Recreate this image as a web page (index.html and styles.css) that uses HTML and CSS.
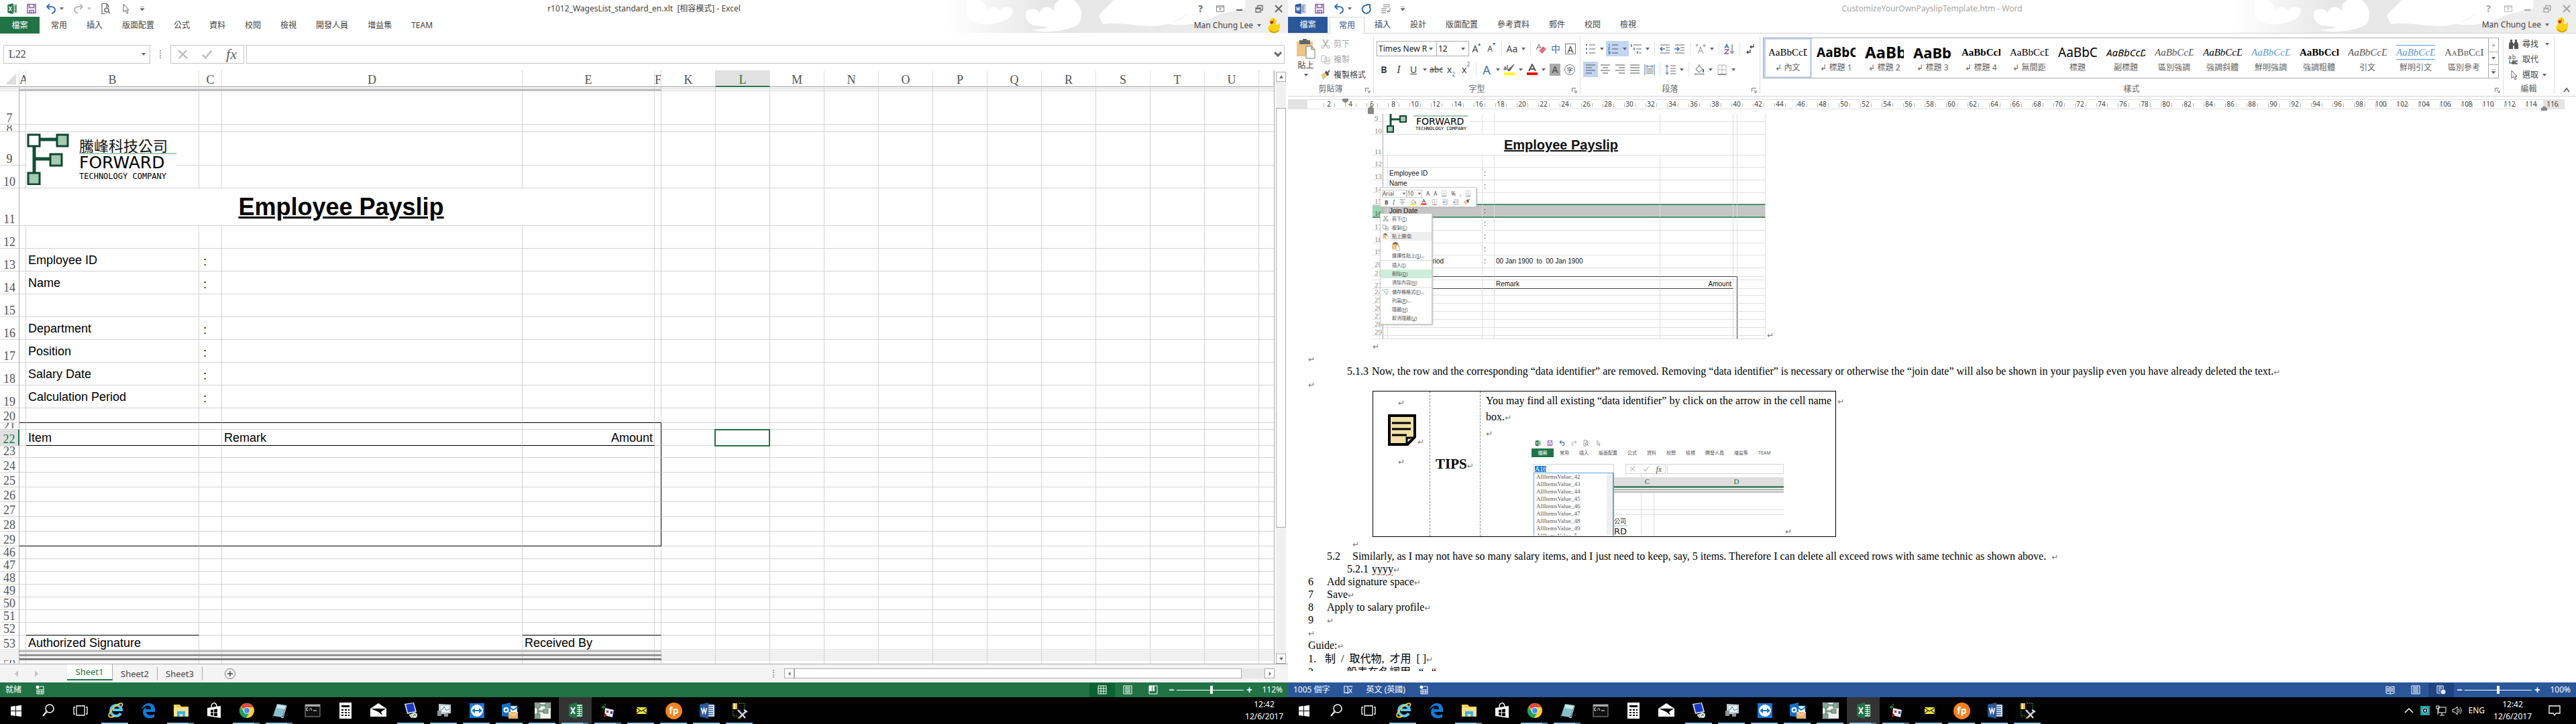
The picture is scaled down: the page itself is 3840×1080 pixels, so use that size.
FILE: index.html
```html
<!DOCTYPE html>
<html lang="zh-Hant">
<head>
<meta charset="utf-8">
<title>Excel and Word</title>
<link rel="stylesheet" href="styles.css">
</head>
<body>
<svg class="defs" aria-hidden="true">
  <symbol id="excel" viewBox="0 0 24 24"><path d="M12 3h10v18H12z" fill="#fff" stroke="#217346"/><path d="M14 6h3M18 6h3M14 9h3M18 9h3M14 12h3M18 12h3M14 15h3M18 15h3M14 18h3M18 18h3" stroke="#217346" stroke-width="2"/><path d="M2 3l12-3v24L2 21z" fill="#217346"/><path d="M5 7l6 10M11 7L5 17" stroke="#fff" stroke-width="2"/></symbol>
  <symbol id="word" viewBox="0 0 24 24"><path d="M12 3h11v18H12z" fill="#fff" stroke="#2b579a"/><path d="M14 6h7M14 9h7M14 12h7M14 15h7M14 18h7" stroke="#2b579a" stroke-width="1.5"/><path d="M1 3l13-3v24L1 21z" fill="#2b579a"/><path d="M3.500 8l2 8 2-7 2 7 2-8" stroke="#fff" stroke-width="1.600" fill="none"/></symbol>
  <symbol id="save" viewBox="0 0 16 16"><path d="M2 1.500h12v13H2zM4.500 1.500v5h7v-5M5 14.500v-4h6v4M7.500 12v2" fill="none" stroke="#8b57a8" stroke-width="1.500"/></symbol>
  <symbol id="undo" viewBox="0 0 16 16"><path d="M6 1L2 5l4 4M2 5h6c4 0 6 2 6 5s-2 4-5 5" fill="none" stroke="#3a72b5" stroke-width="2"/></symbol>
  <symbol id="redo" viewBox="0 0 16 16"><path d="M10 1l4 4-4 4M14 5H8c-4 0-6 2-6 5s2 4 5 5" fill="none" stroke="#bbb" stroke-width="2"/></symbol>
  <symbol id="repeat" viewBox="0 0 16 16"><path d="M9 3a6 6 0 1 0 4 3M8 2h5v5" fill="none" stroke="#3a72b5" stroke-width="2"/></symbol>
  <symbol id="preview" viewBox="0 0 16 16"><path d="M12 6V4L9 .5H2v15h5M9 1v4h3M14 15l-3-3" fill="none" stroke="#666" stroke-width="1.200"/><circle cx="9" cy="10" r="3" fill="none" stroke="#666" stroke-width="1.500"/></symbol>
  <symbol id="cursor" viewBox="0 0 16 16"><path d="M5 1v12l3-3 2 5 2-1-2-4h3z" fill="#fff" stroke="#666"/></symbol>
  <symbol id="lines" viewBox="0 0 16 16"><path d="M4 2h10M4 5h10M1 8h8M1 11h7M1 14h7M14 7v5h-4M12 10l-2 2 2 2" fill="none" stroke="#777"/></symbol>
  <symbol id="dd" viewBox="0 0 8 8"><path d="M1 2h6L4 6z" fill="#666"/></symbol>
  <symbol id="more" viewBox="0 0 8 8"><path d="M1 1h6M1 3.500h6L4 7z" fill="#666" stroke="#666" stroke-width=".6"/></symbol>
  <symbol id="launch" viewBox="0 0 8 8"><path d="M.5 6V.5H6M3 3l4 4M7 4v3H4" fill="none" stroke="#777"/></symbol>
  <symbol id="ribbonopt" viewBox="0 0 14 12"><path d="M.5 1h13v10H.5zM.5 3h13M7 9V5M5 7l2-2 2 2" fill="none" stroke="currentColor"/></symbol>
  <symbol id="restore" viewBox="0 0 12 12"><path d="M1 5h7v6H1zM1 6h7M3.500 4V1.500H11V8H9" fill="none" stroke="currentColor" stroke-width="1.300"/></symbol>
  <symbol id="close" viewBox="0 0 12 12"><path d="M1 1l10 10M11 1L1 11" stroke="currentColor" stroke-width="2"/></symbol>
  <symbol id="duck" viewBox="0 0 20 24"><path d="M5 10C2 6 5 1 9 1s6 4 4 8l-1 2c4 0 6-2 7-3 1 8-2 15-9 15-8 0-12-6-5-13z" fill="#f8d213"/><path d="M4 6l4-1 2 2-3 3-2-1z" fill="#d42a1c"/><path d="M9 4h1" stroke="#222"/><path d="M4 19c3 4 9 5 13 0" stroke="#d89c08" stroke-width="2" fill="none"/></symbol>
  <symbol id="art" viewBox="0 0 510 50" preserveAspectRatio="none"><linearGradient id="fade"><stop offset="0" stop-color="#e6e6e6" stop-opacity="0"/><stop offset=".3" stop-color="#e6e6e6"/><stop offset="1" stop-color="#eee"/></linearGradient><path d="M0 0h510v49H0z" fill="url(#fade)"/><path d="M32 0c-6 20 0 32 20 36 30 2 50-10 48-22-8-6-16-4-18 2-8-8-16-8-20 0C62 6 50-2 44 0zM120 16c-4 10 2 20 12 22l20 2c-4 4-16 4-24 4 16 6 50 4 70-8 8-14 4-28-8-36h-20c-8 4-10 10-8 18-8-12-20-8-22 2-4-8-14-8-20-4zM250 0c-8 10-16 14-22 24l6 12c30-4 60 6 86 2 20-4 30-10 40-18-10 14-30 16-44 12 20 8 60 8 90-10l40-10V0z" fill="#fff"/></symbol>
  <symbol id="logo-mark" viewBox="0 0 64 78"><path d="M12 10h40M12 10v56M12 39h30" stroke="#145039" stroke-width="5"/><path d="M3 3h17v17H3z" fill="#fff" stroke="#124634" stroke-width="3"/><path d="M46 3h16v17H46zM36 32h17v17H36zM3 60h17v17H3z" fill="#a5cbb0" stroke="#124634" stroke-width="3"/></symbol>
  <symbol id="t-win" viewBox="0 0 24 24"><path d="M4 6l7-1v7H4zM12 5l8-1v8h-8zM4 13h7v7l-7-1zM12 13h8v8l-8-1z" fill="#fff"/></symbol>
  <symbol id="t-search" viewBox="0 0 24 24"><circle cx="14" cy="9" r="6" fill="none" stroke="#fff" stroke-width="1.500"/><path d="M10 13l-6 7" stroke="#fff" stroke-width="2"/></symbol>
  <symbol id="t-view" viewBox="0 0 24 24"><path d="M6 5h12v14H6zM4 7H2v10h2M20 7h2v10h-2" fill="none" stroke="#fff" stroke-width="1.300"/></symbol>
  <symbol id="t-ie" viewBox="0 0 24 24"><path d="M20 16a8 8 0 1 1 1-5H8" fill="none" stroke="#55c5f3" stroke-width="4"/><path d="M3 21C-2 17 18-3 22 2c1 1 0 3-1 4M3 21c2 2 6 0 8-1" fill="none" stroke="#f7c92b" stroke-width="2"/></symbol>
  <symbol id="t-edge" viewBox="0 0 24 24"><path d="M2 11C4 2 10 1 13 1c7 0 10 6 9 13H9c1 6 8 6 12 3v5C13 25 4 23 4 14c0-3 2-6 5-7-1 1-1 2-1 3h8c0-8-9-7-14 1z" fill="#0f7bd9"/></symbol>
  <symbol id="t-folder" viewBox="0 0 24 24"><path d="M1 3h9l2 3h11v15H1z" fill="#f5cf62"/><path d="M1 8h22v12H1z" fill="#fde18d"/><path d="M6 21v-8h12v8h-4v-4h-4v4z" fill="#3fb0e8"/></symbol>
  <symbol id="t-store" viewBox="0 0 24 24"><path d="M2 8l20-3v18L2 20z" fill="#fff"/><path d="M8 7c0-8 8-8 8-1" fill="none" stroke="#fff" stroke-width="1.500"/><path d="M7 11l4-.5v4H7zM12 10l5-.5v5h-5zM7 15.500h4v4l-4-.5zM12 15.500h5v5l-5-.5z" fill="#000"/></symbol>
  <symbol id="t-chrome" viewBox="0 0 24 24"><circle cx="12" cy="12" r="11" fill="#fccd34"/><path d="M12 12L2.500 6.500A11 11 0 0 1 21.500 7H12z" fill="#dd4b3e"/><path d="M2.500 6.500A11 11 0 0 0 11 23l5-9-8 0z" fill="#1da361"/><circle cx="12" cy="12" r="5" fill="#fff"/><circle cx="12" cy="12" r="4" fill="#4a8af4"/></symbol>
  <symbol id="t-note" viewBox="0 0 24 24"><path d="M8 2l14 2-6 18L2 20z" fill="#86bfc9"/><path d="M9 3l12 2-2 5-12-2z" fill="#c9e8ec"/><path d="M22 5l-5 18-3-1" fill="none" stroke="#ddd"/></symbol>
  <symbol id="t-cmd" viewBox="0 0 24 24"><path d="M1 3h22v18H1z" fill="#111" stroke="#999"/><path d="M1 3h22v3H1z" fill="#aaa"/><path d="M5 8H3v4h2M7 9v1M7 11v1M9 8l2 4M13 12h5" stroke="#fff" fill="none"/></symbol>
  <symbol id="t-calc" viewBox="0 0 24 24"><path d="M3 0h18v24H3z" fill="#fff"/><path d="M6 4h12v3H6zM6 10h3v2H6zM11 10h3v2h-3zM16 10h2v2h-2zM6 14h3v2H6zM11 14h3v2h-3zM16 14h2v2h-2zM6 18h3v2H6zM11 18h3v2h-3zM16 18h2v2h-2z" fill="#000"/></symbol>
  <symbol id="t-mail" viewBox="0 0 24 24"><path d="M0 9l12-8 12 8v12H0z" fill="#fff"/><path d="M1 9h22l-7 5 2 5-6-5z" fill="#000"/></symbol>
  <symbol id="t-rdp" viewBox="0 0 24 24"><path d="M2 2l14-2 4 14-14 3z" fill="#e4e7ee"/><path d="M4 3l11-2 3 12-11 2z" fill="#1b3ac4"/><path d="M8 18l8-2 5 4-9 3z" fill="#ccc"/><circle cx="17" cy="19" r="4" fill="#dfe8dd"/><path d="M15 20l2-2 2 1" stroke="#2c9a3c" stroke-width="1.500" fill="none"/></symbol>
  <symbol id="t-perf" viewBox="0 0 24 24"><path d="M4 2l18 1v13L4 18z" fill="#c9ccd0"/><path d="M7 5h12v9H7z" fill="#eef7ff"/><path d="M7 11l3-1 2-4 3 6 4-2" stroke="#2783c8" fill="none"/><path d="M2 12h6v8H2zM12 17h6v4h-6z" fill="#8e9299"/></symbol>
  <symbol id="t-tv" viewBox="0 0 24 24"><path d="M1 1h22v22H1z" fill="#1878d8"/><circle cx="12" cy="12" r="9" fill="#fff"/><path d="M4 12l5-4v3h6V8l5 4-5 4v-3H9v3z" fill="#1878d8"/></symbol>
  <symbol id="t-outlook" viewBox="0 0 24 24"><path d="M12 5h11v11H12z" fill="#fff" stroke="#1072c6"/><path d="M12 7l5 4 6-4" fill="none" stroke="#1072c6" stroke-width="2"/><path d="M0 3l13-3v22L0 20z" fill="#1072c6"/><circle cx="6.500" cy="11" r="3" fill="none" stroke="#fff" stroke-width="2"/><path d="M10 14h14v10H10z" fill="#f0b36b"/><path d="M10 14l7 5 7-5" fill="none" stroke="#fff"/></symbol>
  <symbol id="t-f" viewBox="0 0 24 24"><path d="M0 0h24v24H0z" fill="#eef1ee"/><path d="M5 4h15M5 4v17M5 13h11" stroke="#7a9a88" stroke-width="3"/><path d="M1 1h7v7H1zM16 1h7v7h-7zM13 10h7v6h-7zM1 17h7v6H1z" fill="#87a895" stroke="#5d7d6b"/></symbol>
  <symbol id="t-cal" viewBox="0 0 24 24"><path d="M7 8l13 3-2 11-12-3z" fill="#e9e9ef"/><path d="M9 12h3v3H9z" fill="#d22"/><path d="M15 13h3v4h-3z" fill="#24b"/><path d="M1 7l4-3 3 4-4 1zM6 1l3 2-2 2" fill="#2a7d1f"/><path d="M6 15l4 5-5 2z" fill="#a11"/></symbol>
  <symbol id="t-env" viewBox="0 0 24 24"><path d="M5 7h15v10H5z" fill="#e8e337"/><path d="M5 8l7 5 8-5M5 16l5-4M20 16l-5-4" fill="none" stroke="#333" stroke-width="1.300"/></symbol>
  <symbol id="t-tools" viewBox="0 0 24 24"><path d="M1 1h7v9H1z" fill="#e6b422"/><path d="M3 1h2v9H3z" fill="#fff2a8"/><path d="M10 1h9v10M2 12v8h6" stroke="#3db83d" stroke-dasharray="2 1" fill="none"/><path d="M9 11l11 12M22 12L11 23M18 11l5 3" stroke="#cfd3da" stroke-width="2.500"/><path d="M12 21l-3 3" stroke="#d69a2c" stroke-width="2"/></symbol>
  <symbol id="statgrid" viewBox="0 0 14 14"><circle cx="4" cy="3" r="2.500" fill="#fff"/><path d="M7 2h6v11H3V7h10M3 10h10M6 7v6M10 7v6" fill="none" stroke="#fff"/></symbol>
  <symbol id="paste" viewBox="0 0 28 30"><path d="M0 4h24v22H0z" fill="#eec584"/><path d="M4 2h16v6H4z" fill="#666"/><path d="M9 0h6v4H9z" fill="#666"/><path d="M14 11h8l5 5v13H14zM22 11v5h5" fill="#fff" stroke="#777"/></symbol>
  <symbol id="cut" viewBox="0 0 14 14"><path d="M3 0l6 10M11 0L5 10" stroke="#777" stroke-width="1.500"/><circle cx="3" cy="11" r="2" fill="none" stroke="#777"/><circle cx="11" cy="11" r="2" fill="none" stroke="#777"/></symbol>
  <symbol id="copy" viewBox="0 0 14 14"><path d="M1 1h5l2 2v7H1zM6 4h5l2 2v7H6zM8 8h4M8 10h4" fill="#fff" stroke="#888"/></symbol>
  <symbol id="brush" viewBox="0 0 14 14"><path d="M0 6l7-3 3 4-6 7z" fill="#eec584"/><path d="M7 3l3 4 1-1-3-4zM10 4l3-4" fill="#555" stroke="#555" stroke-width="2"/></symbol>
  <symbol id="eraser" viewBox="0 0 16 16"><path d="M1 9L5 1l3 6M2 6h5" fill="none" stroke="#666"/><path d="M5 11l6-7 5 4-6 7z" fill="#e06c80"/></symbol>
  <symbol id="bullets" viewBox="0 0 16 16"><path d="M1 2h2M1 8h2M1 14h2" stroke="#3a72b5" stroke-width="2"/><path d="M6 2h9M6 8h9M6 14h9" stroke="#666"/></symbol>
  <symbol id="numbered" viewBox="0 0 16 16"><path d="M1 1h1v3M0 6h3l-3 3h3M0 12h3v1H1h2v2H0" stroke="#3a72b5" fill="none"/><path d="M6 2h9M6 8h9M6 14h9" stroke="#555"/></symbol>
  <symbol id="multi" viewBox="0 0 16 16"><path d="M1 1v4M5 6v4M10 11v4" stroke="#3a72b5" stroke-width="1.500"/><path d="M4 2h12M8 8h8M12 14h4" stroke="#666"/></symbol>
  <symbol id="outdent" viewBox="0 0 16 16"><path d="M1 2h14M9 6h6M9 10h6M1 14h14" stroke="#666"/><path d="M8 8H2M4 5L1 8l3 3" stroke="#3a72b5" stroke-width="1.500" fill="none"/></symbol>
  <symbol id="indent" viewBox="0 0 16 16"><path d="M1 2h14M9 6h6M9 10h6M1 14h14" stroke="#666"/><path d="M0 8h6M4 5l3 3-3 3" stroke="#3a72b5" stroke-width="1.500" fill="none"/></symbol>
  <symbol id="asian" viewBox="0 0 16 16"><path d="M4 15L8 5l4 10M5 11h6M1 1l3 3M4 1L1 4M11 3h4M13 1l2 2-2 2" fill="none" stroke="#aaa" stroke-width="1.300"/></symbol>
  <symbol id="sort" viewBox="0 0 16 16"><path d="M1 7l3-6 3 6M2 5h4" stroke="#3a72b5" fill="none" stroke-width="1.300"/><path d="M1 9h6l-6 6h6" stroke="#8b57a8" fill="none" stroke-width="1.300"/><path d="M12 1v13M9 11l3 4 3-4" stroke="#555" fill="none"/></symbol>
  <symbol id="marks" viewBox="0 0 16 16"><path d="M13 1v4H8M10 3L8 5l2 2M8 9v4H3M5 11l-2 2 2 2" fill="none" stroke="#444" stroke-width="1.300"/></symbol>
  <symbol id="al" viewBox="0 0 16 16"><path d="M1 1h14M1 5h9M1 9h14M1 13h9" stroke="#555"/></symbol>
  <symbol id="ac" viewBox="0 0 16 16"><path d="M1 1h14M4 5h8M1 9h14M4 13h8" stroke="#555"/></symbol>
  <symbol id="ar" viewBox="0 0 16 16"><path d="M1 1h14M6 5h9M1 9h14M6 13h9" stroke="#555"/></symbol>
  <symbol id="aj" viewBox="0 0 16 16"><path d="M1 1h14M1 5h14M1 9h14M1 13h14" stroke="#555"/></symbol>
  <symbol id="ad" viewBox="0 0 16 16"><path d="M1 0v16M15 0v16M3 3h10M5 1L3 3l2 2M11 1l2 2-2 2" stroke="#3a72b5" fill="none"/><path d="M3 7h10M3 10h10M3 13h10" stroke="#555"/></symbol>
  <symbol id="spacing" viewBox="0 0 16 16"><path d="M3 1v14M1 4l2-3 2 3M1 12l2 3 2-3" stroke="#3a72b5" fill="none"/><path d="M8 2h8M8 6h8M8 10h8M8 14h8" stroke="#666"/></symbol>
  <symbol id="bucket" viewBox="0 0 16 16"><path d="M3 7l5-5 5 5-5 5zM8 2V0" fill="#fff" stroke="#555"/><path d="M14 7v5" stroke="#3a72b5" stroke-width="2"/><path d="M1 14h14v2H1z" fill="#fff" stroke="#888"/></symbol>
  <symbol id="fillyellow" viewBox="0 0 16 16"><path d="M3 7l5-5 5 5-5 5zM8 2V0" fill="#fff" stroke="#555"/><path d="M14 7v5" stroke="#3a72b5" stroke-width="2"/><path d="M1 12h14v4H1z" fill="#ff0"/></symbol>
  <symbol id="border" viewBox="0 0 16 16"><path d="M2 1h12v14H2zM8 1v14M2 8h12" fill="none" stroke="#777" stroke-dasharray="1 1"/><path d="M2 15h12" stroke="#444"/></symbol>
  <symbol id="find" viewBox="0 0 16 16"><path d="M2 5h5v10H1V8zM9 5h5l1 3v7H9zM3 1h3v4H3zM10 1h3v4h-3zM6 7h4v3H6z" fill="#555"/></symbol>
  <symbol id="replace" viewBox="0 0 16 16"><path d="M1 3h3v4H1V5h3M7 0v7h3V3H7" fill="none" stroke="#666"/><path d="M6 10h3v4H6v-2h3M14 10h-3v4h3" fill="none" stroke="#444" stroke-width="1.400"/><path d="M2 9v4h3" fill="none" stroke="#3a72b5" stroke-width="1.400"/></symbol>
  <symbol id="highlight" viewBox="0 0 18 18"><path d="M16 1l-6 9-3 1 1-3z" fill="#777" stroke="#555"/><path d="M1 5h3v4H1V7h3M6 2v7h2" stroke="#444" fill="none"/><path d="M1 13h16v4H1z" fill="#ff0"/></symbol>
  <symbol id="fontcolor" viewBox="0 0 18 18"><path d="M4 11L9 1l5 10M6 8h6" stroke="#555" fill="none" stroke-width="2"/><path d="M1 13h16v4H1z" fill="#f00"/></symbol>
  <symbol id="v-normal" viewBox="0 0 14 14"><path d="M1 1h12v12H1zM5 1v12M9 1v12M1 5h12M1 9h12" fill="none" stroke="#fff"/></symbol>
  <symbol id="v-page" viewBox="0 0 14 14"><path d="M1 1h12v12H1zM4 3h6v8H4zM5 5h4M5 7h4M5 9h4" fill="none" stroke="#fff"/></symbol>
  <symbol id="v-break" viewBox="0 0 14 14"><path d="M1 1h12v12H1z" fill="none" stroke="#fff"/><path d="M1 1h4v8H1zM6 1h3v8H6z" fill="#fff"/></symbol>
  <symbol id="v-read" viewBox="0 0 14 14"><path d="M1 2l6 1 6-1v10l-6 1-6-1zM7 3v10M2 5h4M2 7h4M2 9h4M8 5h4M8 7h4M8 9h4" fill="none" stroke="#fff"/></symbol>
  <symbol id="v-lines" viewBox="0 0 14 14"><path d="M1 1h12v12H1zM3 3h8M3 5h8M3 7h8M3 9h8M3 11h8" fill="none" stroke="#fff"/></symbol>
  <symbol id="v-web" viewBox="0 0 14 14"><path d="M10 6V1H1v11h5M3 3h5M3 5h5M3 7h3M3 9h3" fill="none" stroke="#fff"/><circle cx="10" cy="10" r="3.500" fill="#dfe8f5"/></symbol>
  <symbol id="proof" viewBox="0 0 16 14"><path d="M1 1h4l2 1v11l-2-1H1zM7 2l2-1M9 5l5 7M14 5l-5 7M7 13l2-1M9 1h5v2" fill="none" stroke="#fff" stroke-width="1.200"/></symbol>
</svg>

<div class="screens">
<!-- Excel window -->
<section class="win excel">
  <header class="title">
    <svg class="art"><use href="#art"/></svg>
    <div class="qat">
      <button aria-label="Excel"><svg><use href="#excel"/></svg></button><button aria-label="儲存"><svg><use href="#save"/></svg></button>
      <span><button aria-label="復原"><svg><use href="#undo"/></svg></button><button class="dd" aria-label="復原選單"><svg><use href="#dd"/></svg></button></span>
      <span><button aria-label="重做"><svg><use href="#redo"/></svg></button><button class="dd faint" aria-label="重做選單"><svg><use href="#dd"/></svg></button></span>
      <button aria-label="預覽列印"><svg><use href="#preview"/></svg></button><button aria-label="選取"><svg><use href="#cursor"/></svg></button><button class="dd" aria-label="自訂"><svg><use href="#more"/></svg></button>
    </div>
    <h1>r1012_WagesList_standard_en.xlt&nbsp; [相容模式] - Excel</h1>
    <div class="ctl"><button>?</button><button aria-label="功能區選項"><svg><use href="#ribbonopt"/></svg></button><button aria-label="最小化"><i class="min"></i></button><button aria-label="還原"><svg><use href="#restore"/></svg></button><button aria-label="關閉"><svg><use href="#close"/></svg></button></div>
  </header>
  <nav class="tabs"><button class="file">檔案</button><button>常用</button><button>插入</button><button>版面配置</button><button>公式</button><button>資料</button><button>校閱</button><button>檢視</button><button>開發人員</button><button>增益集</button><button>TEAM</button>
    <div class="account">Man Chung Lee<svg class="arr"><use href="#dd"/></svg><svg class="duck"><use href="#duck"/></svg></div></nav>
  <div class="formula">
    <div class="namebox"><input aria-label="名稱方塊" value="L22"><svg class="arr"><use href="#dd"/></svg></div>
    <i class="dots"></i>
    <div class="fxbox"><button aria-label="取消"><svg viewBox="0 0 16 16"><path d="M1 2l13 12M13 2L2 14" stroke="#c0c0c0" stroke-width="2.500"/></svg></button><button aria-label="輸入"><svg viewBox="0 0 18 16"><path d="M1 9l5 5L16 2" stroke="#c0c0c0" stroke-width="3" fill="none"/></svg></button><button class="fx">fx</button></div>
    <div class="fbar"><input aria-label="資料編輯列"><svg viewBox="0 0 12 8"><path d="M1 1l5 5 5-5" fill="none" stroke="#666" stroke-width="3"/></svg></div>
  </div>
  <div class="gridarea">
    <div class="sheetwrap">
    <table class="sheet">
      <colgroup><col class="c0"><col class="cA"><col class="cB"><col class="cC"><col class="cD"><col class="cE"><col class="cF"><col class="cK"><col class="cK"><col class="cK"><col class="cK"><col class="cK"><col class="cK"><col class="cK"><col class="cK"><col class="cK"><col class="cK"><col class="cK"><col></colgroup>
      <thead><tr><th class="corner"><th>A<th>B<th>C<th>D<th>E<th>F<th>K<th class="on">L<th>M<th>N<th>O<th>P<th>Q<th>R<th>S<th>T<th>U<th></tr></thead>
      <tbody>
      <tr class="h3"><th><td><td><td><td><td><td><td colspan="12">
      <tr class="h3 bar1"><th><td><td><td><td><td><td><td colspan="12">
      <tr class="h50"><th>7<td><td><td><td><td><td><td colspan="12">
      <tr class="h11"><th><div>8</div><td><td><td><td><td><td><td colspan="12">
      <tr class="h50"><th>9<td><td class="anchor"><div class="logo"><svg><use href="#logo-mark"/></svg><div><b>騰峰科技公司</b><hr><strong>FORWARD</strong><small>TECHNOLOGY COMPANY</small></div></div><td><td><td><td><td colspan="12">
      <tr class="h34"><th>10<td><td><td><td><td><td><td colspan="12">
      <tr class="h56"><th>11<td class="nr"><td class="slip" colspan="4">Employee Payslip<td><td colspan="12">
      <tr class="h34"><th>12<td><td><td><td><td><td><td colspan="12">
      <tr class="h34"><th>13<td><td>Employee ID<td class="col">:<td><td><td><td colspan="12">
      <tr class="h34"><th>14<td><td>Name<td class="col">:<td><td><td><td colspan="12">
      <tr class="h34"><th>15<td><td><td><td><td><td><td colspan="12">
      <tr class="h34"><th>16<td><td>Department<td class="col">:<td><td><td><td colspan="12">
      <tr class="h34"><th>17<td><td>Position<td class="col">:<td><td><td><td colspan="12">
      <tr class="h34"><th>18<td><td>Salary Date<td class="col">:<td><td><td><td colspan="12">
      <tr class="h34"><th>19<td><td>Calculation Period<td class="col">:<td><td><td><td colspan="12">
      <tr class="h22 under"><th>20<td><td><td><td><td><td><td colspan="12">
      <tr class="h10 boxed"><th><div>21</div><td><td><td><td><td><td><td colspan="12">
      <tr class="h24 boxed head"><th class="on">22<td><td>Item<td><td>Remark<td class="right">Amount<td><td class="anchor" colspan="12"><i class="selcell"></i>
      <tr class="h18 boxed"><th>23<td><td><td><td><td><td><td colspan="12">
      <tr class="h22 boxed"><th>24<td><td><td><td><td><td><td colspan="12">
      <tr class="h22 boxed"><th>25<td><td><td><td><td><td><td colspan="12">
      <tr class="h22 boxed"><th>26<td><td><td><td><td><td><td colspan="12">
      <tr class="h22 boxed"><th>27<td><td><td><td><td><td><td colspan="12">
      <tr class="h22 boxed"><th>28<td><td><td><td><td><td><td colspan="12">
      <tr class="h22 boxed under"><th>29<td><td><td><td><td><td><td colspan="12">
      <tr class="h19"><th>46<td><td><td><td><td><td><td colspan="12">
      <tr class="h19"><th>47<td><td><td><td><td><td><td colspan="12">
      <tr class="h19"><th>48<td><td><td><td><td><td><td colspan="12">
      <tr class="h19"><th>49<td><td><td><td><td><td><td colspan="12">
      <tr class="h19"><th>50<td><td><td><td><td><td><td colspan="12">
      <tr class="h19"><th>51<td><td><td><td><td><td><td colspan="12">
      <tr class="h19"><th>52<td><td class="sign"><td><td><td class="sign"><td class="sign"><td colspan="12">
      <tr class="h22"><th>53<td><td>Authorized Signature<td><td><td>Received By<td><td colspan="12">
      <tr class="h3 bar1"><th><td><td><td><td><td><td><td colspan="12">
      <tr class="h3"><th><td><td><td><td><td><td><td colspan="12">
      <tr class="h3 bar2"><th><td><td><td><td><td><td><td colspan="12">
      <tr class="h3"><th><td><td><td><td><td><td><td colspan="12">
      <tr class="h3 bar3"><th><td><td><td><td><td><td><td colspan="12">
      <tr class="h6"><th><div>59</div><td><td><td><td><td><td><td colspan="12">
      </tbody>
    </table>
    </div>
    <div class="vscroll"><button aria-label="上"><svg viewBox="0 0 8 8"><path d="M1 6h6L4 1z" fill="#777"/></svg></button><i class="before"></i><i class="thumb"></i><i class="post"></i><button aria-label="下"><svg><use href="#dd"/></svg></button></div>
  </div>
  <div class="sheetbar">
    <button class="nav" aria-label="上一張"><svg viewBox="0 0 8 12"><path d="M6 1v10L1 6z" fill="#c4c4c4"/></svg></button><button class="nav" aria-label="下一張"><svg viewBox="0 0 8 12"><path d="M2 1v10l5-5z" fill="#c4c4c4"/></svg></button>
    <button class="st on">Sheet1</button><button class="st">Sheet2</button><button class="st">Sheet3</button>
    <button class="add" aria-label="新增"><svg viewBox="0 0 18 18"><circle cx="9" cy="9" r="7.500" fill="none" stroke="#777"/><path d="M5 9h8M9 5v8" stroke="#666" stroke-width="2"/></svg></button>
    <div class="hscroll"><i class="dots"></i><button aria-label="左"><svg viewBox="0 0 8 12"><path d="M6 1v10L1 6z" fill="#777"/></svg></button><i class="thumb"></i><i class="post"></i><button aria-label="右"><svg viewBox="0 0 8 12"><path d="M2 1v10l5-5z" fill="#777"/></svg></button></div>
  </div>
  <footer class="status green"><span>就緒</span><svg><use href="#statgrid"/></svg>
    <div class="views"><button class="on" aria-label="標準"><svg><use href="#v-normal"/></svg></button><button aria-label="整頁"><svg><use href="#v-page"/></svg></button><button aria-label="分頁"><svg><use href="#v-break"/></svg></button></div>
    <div class="zoom"><button>−</button><input type="range" aria-label="縮放" min="0" max="100" value="52"><button>+</button><span>112%</span></div></footer>
  <nav class="taskbar">
    <div class="sys"><button aria-label="開始"><svg><use href="#t-win"/></svg></button><button aria-label="搜尋"><svg><use href="#t-search"/></svg></button><button aria-label="工作檢視"><svg><use href="#t-view"/></svg></button></div>
    <button class="run" aria-label="Internet Explorer"><svg><use href="#t-ie"/></svg></button><button aria-label="Edge"><svg><use href="#t-edge"/></svg></button><button class="run grp" aria-label="檔案總管"><svg><use href="#t-folder"/></svg></button><button aria-label="市集"><svg><use href="#t-store"/></svg></button><button class="run grp" aria-label="Chrome"><svg><use href="#t-chrome"/></svg></button><button class="run grp" aria-label="記事本"><svg><use href="#t-note"/></svg></button><button aria-label="命令提示字元"><svg><use href="#t-cmd"/></svg></button><button aria-label="小算盤"><svg><use href="#t-calc"/></svg></button><button aria-label="郵件"><svg><use href="#t-mail"/></svg></button><button class="run" aria-label="遠端桌面"><svg><use href="#t-rdp"/></svg></button><button class="run" aria-label="監視"><svg><use href="#t-perf"/></svg></button><button class="run" aria-label="TeamViewer"><svg><use href="#t-tv"/></svg></button><button class="run" aria-label="Outlook"><svg><use href="#t-outlook"/></svg></button><button class="run" aria-label="Forward"><svg><use href="#t-f"/></svg></button><button class="run grp act" aria-label="Excel"><svg><use href="#excel"/></svg></button><button class="run grp" aria-label="行事曆"><svg><use href="#t-cal"/></svg></button><button class="run" aria-label="信件"><svg><use href="#t-env"/></svg></button><button class="run"><span class="fp">fp</span></button><button class="run" aria-label="Word"><svg><use href="#word"/></svg></button><button class="run" aria-label="工具"><svg><use href="#t-tools"/></svg></button>
    <div class="tray"><time>12:42<br>12/6/2017</time></div>
  </nav>
</section>

<!-- Word window -->
<section class="win wordwin">
  <header class="title idle">
    <svg class="art"><use href="#art"/></svg>
    <div class="qat">
      <button aria-label="Word"><svg><use href="#word"/></svg></button><button aria-label="儲存"><svg><use href="#save"/></svg></button>
      <span><button aria-label="復原"><svg><use href="#undo"/></svg></button><button class="dd" aria-label="復原選單"><svg><use href="#dd"/></svg></button></span>
      <button aria-label="重複"><svg><use href="#repeat"/></svg></button><button aria-label="段落標記"><svg><use href="#lines"/></svg></button><button class="dd" aria-label="自訂"><svg><use href="#more"/></svg></button>
    </div>
    <h1>CustomizeYourOwnPayslipTemplate.htm - Word</h1>
    <div class="ctl"><button>?</button><button aria-label="功能區選項"><svg><use href="#ribbonopt"/></svg></button><button aria-label="最小化"><i class="min"></i></button><button aria-label="還原"><svg><use href="#restore"/></svg></button><button aria-label="關閉"><svg><use href="#close"/></svg></button></div>
  </header>
  <nav class="tabs lined"><button class="file">檔案</button><button class="on">常用</button><button>插入</button><button>設計</button><button>版面配置</button><button>參考資料</button><button>郵件</button><button>校閱</button><button>檢視</button>
    <div class="account">Man Chung Lee<svg class="arr"><use href="#dd"/></svg><svg class="duck"><use href="#duck"/></svg></div></nav>
  <div class="ribbon">
    <div class="grp1 group"><div class="body clip">
        <button class="big"><svg><use href="#paste"/></svg>貼上<svg class="arr"><use href="#dd"/></svg></button>
        <div class="stack"><button class="off"><svg><use href="#cut"/></svg>剪下</button><button class="off"><svg><use href="#copy"/></svg>複製</button><button><svg><use href="#brush"/></svg>複製格式</button></div></div>
      <div class="cap">剪貼簿<svg><use href="#launch"/></svg></div></div>
    <div class="grp2 group"><div class="body">
        <div class="row"><div class="combo w90"><select aria-label="字型"><option>Times New R</option></select><svg class="arr"><use href="#dd"/></svg></div><div class="combo w48"><select aria-label="字型大小"><option>12</option></select><svg class="arr"><use href="#dd"/></svg></div><button class="ltr">A<sup>▴</sup></button><button class="ltr sm">A<sup>▾</sup></button><i class="sep"></i><button class="ltr">Aa</button><svg class="dd"><use href="#dd"/></svg><i class="sep"></i><button aria-label="清除格式"><svg><use href="#eraser"/></svg></button><button class="cjk">中</button><button class="boxa">A</button></div>
        <div class="row"><button><b>B</b></button><button class="ser"><i>I</i></button><button><u>U</u></button><svg class="dd"><use href="#dd"/></svg><button class="abc"><s>abc</s></button><button>x<sub>2</sub></button><button>x<sup>2</sup></button><i class="sep"></i><button class="glow">A</button><svg class="dd"><use href="#dd"/></svg><button aria-label="醒目提示"><svg class="l"><use href="#highlight"/></svg></button><svg class="dd"><use href="#dd"/></svg><button aria-label="字型色彩"><svg class="l"><use href="#fontcolor"/></svg></button><svg class="dd"><use href="#dd"/></svg><button class="shade">A</button><button class="ring">字</button></div></div>
      <div class="cap">字型<svg><use href="#launch"/></svg></div></div>
    <div class="grp3 group"><div class="body">
        <div class="row"><button aria-label="項目符號"><svg><use href="#bullets"/></svg></button><svg class="dd"><use href="#dd"/></svg><span class="hot"><button aria-label="編號"><svg><use href="#numbered"/></svg></button><svg class="dd"><use href="#dd"/></svg></span><button aria-label="多層次"><svg><use href="#multi"/></svg></button><svg class="dd"><use href="#dd"/></svg><i class="sep"></i><button aria-label="減少縮排"><svg><use href="#outdent"/></svg></button><button aria-label="增加縮排"><svg><use href="#indent"/></svg></button><i class="sep"></i><button aria-label="亞洲配置"><svg><use href="#asian"/></svg></button><svg class="dd"><use href="#dd"/></svg><i class="sep"></i><button aria-label="排序"><svg><use href="#sort"/></svg></button><i class="sep"></i><button aria-label="標記"><svg><use href="#marks"/></svg></button></div>
        <div class="row"><button class="hot" aria-label="靠左"><svg><use href="#al"/></svg></button><button aria-label="置中"><svg><use href="#ac"/></svg></button><button aria-label="靠右"><svg><use href="#ar"/></svg></button><button aria-label="左右對齊"><svg><use href="#aj"/></svg></button><button aria-label="分散對齊"><svg><use href="#ad"/></svg></button><i class="sep"></i><button aria-label="行距"><svg><use href="#spacing"/></svg></button><svg class="dd"><use href="#dd"/></svg><i class="sep"></i><button aria-label="網底"><svg><use href="#bucket"/></svg></button><svg class="dd"><use href="#dd"/></svg><button aria-label="框線"><svg><use href="#border"/></svg></button><svg class="dd"><use href="#dd"/></svg></div></div>
      <div class="cap">段落<svg><use href="#launch"/></svg></div></div>
    <div class="grp4 group"><div class="gallery">
        <button class="on"><span class="s1">AaBbCcDd</span>↲ 內文</button><button><span class="h1">AaBbCc</span>↲ 標題 1</button><button><span class="h2">AaBbC</span>↲ 標題 2</button><button><span class="h3t">AaBbC</span>↲ 標題 3</button><button><span class="s1 b">AaBbCcD</span>↲ 標題 4</button><button><span class="s1">AaBbCcDd</span>↲ 無間距</button><button><span class="t1">AaBbCc</span>標題</button><button><span class="t2">AaBbCcD</span>副標題</button><button><span class="s1 i g">AaBbCcDd</span>區別強調</button><button><span class="s1 i">AaBbCcDd</span>強調斜體</button><button><span class="s1 i bl">AaBbCcDd</span>鮮明強調</button><button><span class="s1 b">AaBbCcD</span>強調粗體</button><button><span class="s1 i g">AaBbCcDd</span>引文</button><button><span class="s1 i bl rule">AaBbCcDd</span>鮮明引文</button><button><span class="s1 sc g">AaBbCcDd</span>區別參考</button>
        <div class="gscroll"><button class="up" aria-label="上"><svg viewBox="0 0 8 8"><path d="M1 6h6L4 2z" fill="#bbb"/></svg></button><button aria-label="下"><svg><use href="#dd"/></svg></button><button aria-label="更多"><svg><use href="#more"/></svg></button></div></div>
      <div class="cap">樣式<svg><use href="#launch"/></svg></div></div>
    <div class="grp5 group"><div class="stack"><button><svg><use href="#find"/></svg>尋找<svg class="arr far"><use href="#dd"/></svg></button><button><svg><use href="#replace"/></svg>取代</button><button><svg><use href="#cursor"/></svg>選取<svg class="arr"><use href="#dd"/></svg></button></div><div class="cap">編輯</div></div>
    <button class="fold" aria-label="摺疊"><svg viewBox="0 0 10 8"><path d="M1 7l4-5 4 5" fill="none" stroke="#666" stroke-width="2"/></svg></button>
  </div>
  <div class="ruler"><i class="mk down"></i><i class="mk hang"></i><i class="mk end"></i>
    <div class="nums"><span>2</span><span>4</span><span>6</span><span>8</span><span>10</span><span>12</span><span>14</span><span>16</span><span>18</span><span>20</span><span>22</span><span>24</span><span>26</span><span>28</span><span>30</span><span>32</span><span>34</span><span>36</span><span>38</span><span>40</span><span>42</span><span>44</span><span>46</span><span>48</span><span>50</span><span>52</span><span>54</span><span>56</span><span>58</span><span>60</span><span>62</span><span>64</span><span>66</span><span>68</span><span>70</span><span>72</span><span>74</span><span>76</span><span>78</span><span>80</span><span>82</span><span>84</span><span>86</span><span>88</span><span>90</span><span>92</span><span>94</span><span>96</span><span>98</span><span>100</span><span>102</span><span>104</span><span>106</span><span>108</span><span>110</span><span>112</span><span>114</span><span>116</span></div></div>
  <main class="doc">
    <div class="figrow"><figure class="fig1">
      <table class="mini">
        <colgroup><col class="m0"><col class="mA"><col class="mB"><col class="mC"><col class="mD"><col class="mE"><col class="mF"><col></colgroup>
        <tr class="k12"><th>9<td><td><td><td><td><td><td>
        <tr class="k19"><th>10<td><td><td><td><td><td><td>
        <tr class="k31"><th>11<td class="nr"><td class="slip" colspan="4">Employee Payslip<td><td>
        <tr class="k18"><th>12<td><td><td><td><td><td><td>
        <tr class="k19"><th>13<td><td>Employee ID<td>:<td><td><td><td>
        <tr class="k19"><th>14<td><td class="high">Name<td>:<td><td><td><td>
        <tr class="k18 above"><th>15<td><td><td><td><td><td><td>
        <tr class="k19 picked"><th>16<td><td>Join Date<td>:<td><td><td><td>
        <tr class="k19"><th>17<td><td><td>:<td><td><td><td>
        <tr class="k19"><th>18<td><td><td>:<td><td><td><td>
        <tr class="k18"><th>19<td><td><td>:<td><td><td><td>
        <tr class="k19"><th>20<td><td>Calculation Period<td>:<td>00 Jan 1900&nbsp; to&nbsp; 00 Jan 1900<td><td><td>
        <tr class="k13 under"><th>21<td><td><td><td><td><td><td>
        <tr class="k5 boxed"><th><td><td><td><td><td><td><td>
        <tr class="k13 boxed head"><th>23<td><td>Item<td><td>Remark<td class="right">Amount<td><td>
        <tr class="k10 boxed"><th>24<td><td><td><td><td><td><td>
        <tr class="k12 boxed"><th>25<td><td><td><td><td><td><td>
        <tr class="k12 boxed"><th>26<td><td><td><td><td><td><td>
        <tr class="k12 boxed"><th>27<td><td><td><td><td><td><td>
        <tr class="k12 boxed"><th>28<td><td><td><td><td><td><td>
        <tr class="k12 boxed"><th>29<td><td><td><td><td><td><td>
        <tr class="k5 boxed"><th><td><td><td><td><td><td><td>
      </table>
      <div class="logo2"><svg viewBox="0 0 32 28"><path d="M6 0v20M6 8h18" stroke="#145039" stroke-width="3"/><path d="M20 3h9v9h-9zM1 18h9v9H1z" fill="#a5cbb0" stroke="#124634" stroke-width="2"/></svg><div><hr><strong>FORWARD</strong><small>TECHNOLOGY COMPANY</small></div></div>
      <div class="minibar"><div><span class="mf">Arial<svg><use href="#dd"/></svg></span><span class="ms">10<svg><use href="#dd"/></svg></span><span>A</span><span>A</span><svg><use href="#border"/></svg><span>%</span><span>,</span><svg><use href="#border"/></svg></div><div><b>B</b><i>I</i><svg><use href="#ac"/></svg><svg><use href="#fillyellow"/></svg><svg><use href="#fontcolor"/></svg><svg><use href="#border"/></svg><svg><use href="#indent"/></svg><svg><use href="#outdent"/></svg><svg><use href="#brush"/></svg></div></div>
      <ul class="menu"><li><svg><use href="#cut"/></svg>剪下(<u>T</u>)<li><svg><use href="#copy"/></svg>複製(<u>C</u>)<li class="opt"><svg><use href="#paste"/></svg>貼上選項:<li class="pic"><svg><use href="#paste"/></svg><li class="ln">選擇性貼上(<u>S</u>)...<li>插入(<u>I</u>)<li class="del">刪除(<u>D</u>)<li class="ln">清除內容(<u>N</u>)<li><svg><use href="#multi"/></svg>儲存格格式(<u>F</u>)...<li>列高(<u>R</u>)...<li>隱藏(<u>H</u>)<li>取消隱藏(<u>U</u>)</ul>
    </figure><span class="pm">↵</span></div>
    <p class="in3"><span class="pm">↵</span></p>
    <p><span class="pm">↵</span></p>
    <p class="in2"><span class="n">5.1.3</span>Now, the row and the corresponding “data identifier” are removed. Removing “data identifier” is necessary or otherwise the “join date” will also be shown in your payslip even you have already deleted the text.<span class="pm">↵</span></p>
    <p><span class="pm">↵</span></p>
    <div class="figrow top"><table class="tips"><tr><td class="ta"><p><span class="pm">↵</span></p><div><svg viewBox="0 0 43 48"><path d="M3 3h38v32L30 46H3z" fill="#efe0a8" stroke="#000" stroke-width="4"/><path d="M7 14h28M7 23h28M7 32h22M29 46V36h12" stroke="#000" stroke-width="3" fill="none"/></svg><span class="pm">↵</span></div><p><span class="pm">↵</span></p>
      <td class="tb"><b>TIPS</b><span class="pm">↵</span>
      <td class="tc"><p>You may find all existing “data identifier” by click on the arrow in the cell name</p><p>box.<span class="pm">↵</span></p><p><span class="pm">↵</span></p>
      <div class="figrow"><figure class="fig2">
        <div class="q"><svg><use href="#excel"/></svg><svg><use href="#save"/></svg><svg><use href="#undo"/></svg><svg><use href="#redo"/></svg><svg><use href="#preview"/></svg><svg><use href="#cursor"/></svg></div>
        <div class="tt"><span class="f">檔案</span><span>常用</span><span>插入</span><span>版面配置</span><span>公式</span><span>資料</span><span>校閱</span><span>檢視</span><span>開發人員</span><span>增益集</span><span>TEAM</span></div>
        <div class="ff"><span class="nb"><mark>A16</mark></span><span class="xx"><svg viewBox="0 0 16 16"><path d="M1 2l13 12M13 2L2 14" stroke="#bbb" stroke-width="2"/></svg><svg viewBox="0 0 18 16"><path d="M1 9l5 5L16 2" stroke="#bbb" stroke-width="2" fill="none"/></svg><em>fx</em></span><span class="bb"></span></div>
        <div class="low"><ul><li>AllItemsValue_42<li>AllItemsValue_43<li>AllItemsValue_44<li>AllItemsValue_45<li>AllItemsValue_46<li>AllItemsValue_47<li>AllItemsValue_48<li>AllItemsValue_49<li>AllItemsValue_5</ul>
          <div class="cells"><div class="hd"><span>C</span><span>D</span></div><div class="fill"></div><div class="gap"></div><div class="tail"><b>公司</b><strong>RD</strong></div></div></div>
      </figure><span class="pm">↵</span></div>
    </table><span class="pm">↵</span></div>
    <p class="in1"><span class="pm tabbed">↵</span></p>
    <p class="in1"><span class="n w38">5.2</span>Similarly, as I may not have so many salary items, and I just need to keep, say, 5 items. Therefore I can delete all exceed rows with same technic as shown above.&nbsp; <span class="pm">↵</span></p>
    <p class="in2"><span class="n">5.2.1</span><span class="wavy">yyyy</span><span class="pm">↵</span></p>
    <p><span class="n w28">6</span>Add signature space<span class="pm">↵</span></p>
    <p><span class="n w28">7</span>Save<span class="pm">↵</span></p>
    <p><span class="n w28">8</span>Apply to salary profile<span class="pm">↵</span></p>
    <p><span class="n w28">9</span><span class="pm">↵</span></p>
    <p><span class="pm">↵</span></p>
    <p class="tall">Guide:<span class="pm">↵</span></p>
    <p class="tall"><span class="n w25">1.</span>制 &nbsp;/ &nbsp;取代物, &nbsp;才用 &nbsp;[ ]<span class="pm">↵</span></p>
    <p class="tall"><span class="n w41">2.</span>一般表在名詞用 &nbsp; “ &nbsp; “</p>
  </main>
  <footer class="status blue"><span>1005 個字</span><svg><use href="#proof"/></svg><span>英文 (英國)</span><svg><use href="#statgrid"/></svg>
    <div class="views"><button aria-label="閱讀"><svg><use href="#v-read"/></svg></button><button aria-label="整頁"><svg><use href="#v-lines"/></svg></button><button class="on" aria-label="Web"><svg><use href="#v-web"/></svg></button></div>
    <div class="zoom"><button>−</button><input type="range" aria-label="縮放" min="0" max="100" value="50"><button>+</button><span>100%</span></div></footer>
  <nav class="taskbar">
    <div class="sys"><button aria-label="開始"><svg><use href="#t-win"/></svg></button><button aria-label="搜尋"><svg><use href="#t-search"/></svg></button><button aria-label="工作檢視"><svg><use href="#t-view"/></svg></button></div>
    <button class="run" aria-label="Internet Explorer"><svg><use href="#t-ie"/></svg></button><button aria-label="Edge"><svg><use href="#t-edge"/></svg></button><button class="run grp" aria-label="檔案總管"><svg><use href="#t-folder"/></svg></button><button aria-label="市集"><svg><use href="#t-store"/></svg></button><button class="run grp" aria-label="Chrome"><svg><use href="#t-chrome"/></svg></button><button class="run grp" aria-label="記事本"><svg><use href="#t-note"/></svg></button><button aria-label="命令提示字元"><svg><use href="#t-cmd"/></svg></button><button aria-label="小算盤"><svg><use href="#t-calc"/></svg></button><button aria-label="郵件"><svg><use href="#t-mail"/></svg></button><button class="run" aria-label="遠端桌面"><svg><use href="#t-rdp"/></svg></button><button class="run" aria-label="監視"><svg><use href="#t-perf"/></svg></button><button class="run" aria-label="TeamViewer"><svg><use href="#t-tv"/></svg></button><button class="run" aria-label="Outlook"><svg><use href="#t-outlook"/></svg></button><button class="run" aria-label="Forward"><svg><use href="#t-f"/></svg></button><button class="run grp act" aria-label="Excel"><svg><use href="#excel"/></svg></button><button class="run grp" aria-label="行事曆"><svg><use href="#t-cal"/></svg></button><button class="run" aria-label="信件"><svg><use href="#t-env"/></svg></button><button class="run"><span class="fp">fp</span></button><button class="run" aria-label="Word"><svg><use href="#word"/></svg></button><button class="run" aria-label="工具"><svg><use href="#t-tools"/></svg></button>
    <div class="tray full"><svg viewBox="0 0 16 16"><path d="M2 11l6-6 6 6" fill="none" stroke="#fff" stroke-width="1.500"/></svg><svg viewBox="0 0 16 16"><path d="M1 1h14v14H1z" fill="#18a5a5"/><circle cx="8" cy="8" r="4" fill="#123" stroke="#cde"/><circle cx="8" cy="8" r="1.500" fill="#fff"/></svg><svg viewBox="0 0 16 16"><path d="M4 3h11v8H4zM9 11v4M6 15h7M1 1h4v4H1zM3 5v9" fill="none" stroke="#fff"/></svg><svg viewBox="0 0 16 16"><path d="M1 6h3l4-4v12l-4-4H1zM10 5q2 3 0 6M12 3q4 5 0 10" fill="none" stroke="#fff"/></svg><span>ENG</span><time>12:42<br>12/6/2017</time><svg class="act" viewBox="0 0 18 16"><path d="M1 1h16v11h-6l-2 3-2-3H1z" fill="none" stroke="#fff" stroke-width="1.300"/></svg></div>
  </nav>
</section>
</div>
</body>
</html>
```
FILE: styles.css
```css
* { box-sizing: border-box; }
body { margin: 0; background: #fff; color: #444; font: 12px/16px "Noto Sans", "Noto Sans CJK TC", sans-serif; }
button { margin: 0; padding: 0; border: 0; background: none; color: inherit; font: inherit; }
input, select { margin: 0; padding: 0; border: 0; background: none; font: inherit; color: inherit; min-width: 0; appearance: none; }
svg { display: block; flex: none; width: 16px; height: 16px; }
.defs { position: absolute; width: 0; height: 0; }
.screens { display: flex; height: 100vh; }
.win { flex: 1 1 0; min-width: 0; display: flex; flex-direction: column; overflow: hidden; }
.arr { width: 8px; height: 8px; }

/* title bar */
.title { position: relative; flex: none; height: 25px; display: grid; grid-template-columns: 1fr auto 1fr; align-items: center; }
.title h1 { margin: 0; font-size: 12px; font-weight: 400; }
.idle h1, .idle .ctl { color: #a6a6a6; }
.art { position: absolute; right: 0; top: 0; width: 510px; height: 50px; z-index: -1; }
.qat { display: flex; gap: 9px; padding-left: 8px; }
.qat span { display: flex; }
.qat button { width: 20px; height: 20px; display: grid; place-items: center; }
.qat .dd { width: 12px; }
.qat .dd svg { width: 8px; height: 8px; }
.faint { opacity: .4; }
.ctl { display: flex; justify-content: flex-end; color: #666; }
.ctl button { width: 29px; height: 24px; display: grid; place-items: center; font-weight: 700; font-size: 14px; }
.ctl svg { width: 12px; height: 12px; }
.min { width: 9px; height: 2px; background: currentColor; margin-top: 4px; }

/* ribbon tabs */
.tabs { flex: none; height: 25px; display: flex; gap: 1px; }
.tabs button { padding: 0 14px; }
.tabs .file { width: 59px; margin-right: 2px; padding: 0; color: #fff; background: #217346; }
.lined { border-bottom: 1px solid #d4d4d4; }
.lined .file { background: #2b579a; }
.lined .on { color: #2b579a; border: 1px solid #d4d4d4; border-bottom: 0; background: #fff; height: 25px; padding: 0 13px; }
.account { margin-left: auto; display: flex; align-items: center; padding-right: 11px; }
.account .arr { margin: 0 8px 0 5px; }
.duck { width: 20px; height: 24px; }

/* formula bar */
.formula { flex: none; display: flex; padding: 17px 5px 10px; height: 55px; }
.formula > div { border: 1px solid #c6c6c6; display: flex; align-items: center; }
.namebox { width: 219px; padding: 0 5px 0 7px; }
.namebox input { flex: 1; font: 16px "Liberation Serif", serif; }
.dots { width: 2px; height: 12px; margin: 8px 14px; border-left: 2px dotted #aaa; }
.fxbox { width: 110px; justify-content: space-around; }
.fx { font: italic 22px "Liberation Serif", serif; color: #666; }
.fbar { flex: 1; margin-left: 3px; padding-right: 3px; }
.fbar input { flex: 1; }
.fbar svg { width: 12px; height: 8px; }

/* worksheet */
.gridarea { flex: 1; min-height: 0; display: flex; overflow: hidden; }
.sheetwrap { flex: 1; min-width: 0; overflow: hidden; border-right: 1px solid #aaa; }
.sheet, .mini { table-layout: fixed; width: 100%; border-spacing: 0; color: #000; font-family: "Liberation Sans", sans-serif; }
.sheet th, .sheet td, .mini th, .mini td { padding: 0; border: 0 solid #d4d4d4; border-width: 0 1px 1px 0; font-weight: 400; overflow: hidden; white-space: nowrap; text-align: left; }
.sheet td { font-size: 18px; line-height: 20px; padding-left: 3px; }
.sheet tbody td:last-child { padding: 0; border-right: 0; background: repeating-linear-gradient(90deg, transparent 0 80px, #d4d4d4 80px 81px); }
.sheet th { font: 18px/16px "Liberation Serif", serif; color: #555; text-align: center; }
.sheet tbody th { vertical-align: bottom; padding-bottom: 1px; border-right-color: #aaa; }
.sheet thead th { height: 25px; border-bottom-color: #999; padding-top: 4px; border-right-color: #e0e0e0; }
.sheet thead .corner { background: linear-gradient(135deg, transparent 50%, #dedede 50%) 8px 5px / 16px 16px no-repeat; }
.sheet .on { background: #e1e1e1; color: #217346; }
.sheet thead .on { border-bottom: 2px solid #217346; }
.sheet tbody .on { border-right: 2px solid #217346; }
.c0 { width: 29px; } .cA, .cF { width: 10px; } .cB { width: 258px; } .cC { width: 34px; } .cD { width: 448px; } .cE { width: 197px; } .cK { width: 81px; }
.h3 > * { height: 3px; } .h6 > * { height: 6px; } .h10 > * { height: 10px; } .h11 > * { height: 11px; } .h18 > * { height: 18px; } .h19 > * { height: 19px; } .h22 > * { height: 22px; } .h24 > * { height: 24px; } .h34 > * { height: 34px; } .h50 > * { height: 50px; } .h56 > * { height: 56px; }
.sheet .h3 > * { line-height: 0; font-size: 0; padding: 0; }
.sheet .h11 div, .sheet .h10 div { height: 8px; line-height: 8px; overflow: hidden; }
.sheet .h6 div { height: 4px; line-height: 12px; overflow: hidden; }
.bar1 td:not(:last-child) { background: #c0c0c0; border-color: #c0c0c0 !important; }
.bar2 td:not(:last-child) { background: #969696; border-color: #969696 !important; }
.bar3 td:not(:last-child) { background: #808080; border-color: #808080 !important; }
.sheet td.col { padding-left: 6px; padding-top: 4px; }
.sheet td.right { text-align: right; padding-right: 2px; }
.sheet td.slip { text-align: center; font: 700 36px/44px "Liberation Sans", sans-serif; text-decoration: underline; }
td.nr { border-right: 0 !important; }
.under td:not(:last-child), .head td:nth-child(n+3):nth-child(-n+6), .sheet .sign { border-bottom-color: #000; }
.boxed td:nth-child(7) { border-right-color: #000; }
.sheet .anchor { position: relative; overflow: visible; }
.selcell { position: absolute; left: 79px; top: -1px; width: 83px; height: 26px; border: 2px solid #217346; }
.logo { position: absolute; left: 0; top: 0; width: 224px; height: 80px; background: #fff; display: flex; gap: 10px; }
.logo svg { width: 64px; height: 78px; margin-top: 1px; }
.logo div { display: flex; flex-direction: column; width: 150px; padding: 7px 0 0 5px; }
.logo b { font: 400 22px/24px "Noto Sans CJK TC", sans-serif; color: #111; }
.logo hr, .logo2 hr { width: 100%; margin: 0; border: 0; border-top: 2px solid #a5cbb0; }
.logo strong { font: 25px/26px "DejaVu Sans", sans-serif; }
.logo small { font: 12px/14px "DejaVu Sans Mono", monospace; }

/* scroll bars */
.vscroll { width: 20px; padding: 2px 3px 0 2px; display: flex; flex-direction: column; }
.vscroll button { height: 15px; border: 1px solid #aaa; display: grid; place-items: center; }
.vscroll svg, .hscroll svg { width: 8px; height: 8px; }
.vscroll .before { height: 39px; background: #f0f0f0; }
.vscroll .thumb { flex: 1; border: 1px solid #aaa; }
.vscroll .post { height: 188px; background: #f0f0f0; }
.sheetbar { flex: none; height: 28px; display: flex; background: #f4f4f4; border-top: 1px solid #aaa; align-items: center; }
.sheetbar .nav { width: 29px; display: grid; justify-items: end; }
.sheetbar .nav svg { width: 8px; height: 12px; }
.sheetbar .nav + .st { margin-left: 42px; }
.st { width: 67px; height: 20px; font-size: 13px; border-right: 1px solid #aaa; }
.st.on { width: 68px; height: 24px; align-self: flex-start; background: #fff; color: #217346; border-bottom: 2px solid #217346; }
.add { margin-left: 32px; }
.add svg { width: 18px; height: 18px; }
.hscroll { margin-left: auto; width: 768px; margin-right: 20px; display: flex; align-items: center; }
.hscroll .dots { margin: 0 15px 0 20px; }
.hscroll button { width: 15px; height: 15px; border: 1px solid #aaa; background: #fff; display: grid; place-items: center; }
.hscroll .thumb { flex: 1; height: 15px; border: 1px solid #aaa; background: #fff; }
.hscroll .post { width: 34px; height: 15px; background: #e8e8e8; }

/* status bars */
.status { flex: none; height: 22px; display: flex; align-items: center; gap: 20px; padding-left: 8px; color: #fff; }
.status svg { width: 14px; height: 14px; }
.green { background: #217346; } .blue { background: #2b579a; }
.views { margin-left: auto; display: flex; }
.views button { width: 38px; height: 21px; display: grid; place-items: center; }
.green .on { background: #0a6332; } .blue .on { background: #1e4484; }
.zoom { display: flex; align-items: center; margin-left: -20px; padding-right: 8px; }
.zoom button { width: 16px; font: 700 14px/16px "Liberation Sans", sans-serif; }
.zoom span { margin-left: 11px; }
.zoom input { width: 100px; height: 12px; background: linear-gradient(#fff, #fff) 0 6px / 100% 1px no-repeat; }
.zoom input::-webkit-slider-thumb { appearance: none; width: 4px; height: 12px; background: #fff; }

/* taskbar */
.taskbar { flex: none; height: 40px; background: #000; color: #fff; display: flex; }
.sys { display: flex; margin-right: 3px; }
.taskbar button { width: 49px; height: 40px; display: grid; place-items: center; }
.taskbar .sys button { width: 48px; }
.taskbar button svg { width: 24px; height: 24px; }
.run { background: linear-gradient(#8fcbf5, #8fcbf5) 4px 38px / 40px 2px no-repeat; }
.run.grp { background: linear-gradient(90deg, #8fcbf5 32px, #5d88ab 32px) 4px 38px / 40px 2px no-repeat; }
.run.act { background-color: #333; }
.fp { width: 25px; height: 25px; border-radius: 50%; background: #f58220; font: 700 14px/24px "Noto Sans", sans-serif; }
.tray { margin-left: auto; display: flex; align-items: center; padding-right: 7px; }
.tray time { text-align: center; line-height: 18px; }
.full { gap: 8px; padding-right: 23px; }
.full time { margin: 0 14px 0 5px; }
.tray .act { width: 18px; height: 16px; margin-left: 3px; }

/* Word ribbon */
.ribbon { flex: none; height: 94px; display: flex; border-bottom: 1px solid #d4d4d4; }
.group { position: relative; display: flex; flex-direction: column; border-right: 1px solid #e1e1e1; margin: 4px 0 3px; }
.grp1 { width: 128px; } .grp2 { width: 308px; } .grp3 { width: 268px; } .grp4 { flex: 1; min-width: 0; } .grp5 { width: 76px; }
.cap { margin-top: auto; height: 14px; line-height: 14px; text-align: center; color: #666; display: flex; justify-content: center; }
.cap svg { position: absolute; right: 4px; bottom: 1px; width: 8px; height: 8px; }
.body { padding: 6px 0 0 4px; display: flex; flex-direction: column; gap: 6px; }
.body.clip { flex-direction: row; padding: 0 0 0 12px; gap: 8px; }
.big { width: 29px; display: flex; flex-direction: column; align-items: center; white-space: nowrap; }
.big svg { width: 28px; height: 30px; margin: 4px 0 2px; }
.big .arr { width: 8px; height: 8px; margin: 2px 0 0; }
.stack { display: flex; flex-direction: column; }
.stack button { display: flex; align-items: center; gap: 5px; height: 23px; white-space: nowrap; }
.clip .stack svg { width: 14px; height: 14px; }
.off { color: #aaa; } .off svg { opacity: .6; }
.row { display: flex; align-items: center; height: 25px; }
.row button { width: 22px; height: 23px; display: grid; place-items: center; grid-auto-flow: column; justify-content: center; flex: none; font-size: 14px; }
.row svg.l { width: 18px; height: 18px; }
.row .dd { width: 12px; height: 8px; }
.row sup, .row sub { font-size: 8px; line-height: 8px; color: #3a72b5; }
.row sup { align-self: start; }
.row sub { align-self: end; }
.row .sm { font-size: 12px; }
.row .sep { width: 1px; height: 20px; margin: 0 4px; background: #e1e1e1; }
.row .abc { font-size: 12px; }
.row .ser { font-family: "Liberation Serif", serif; font-size: 16px; }
.row .glow { color: #3a72b5; font-size: 18px; }
.row .cjk { color: #3a72b5; }
.row .boxa { width: 16px; height: 16px; border: 1px solid #777; margin: 0 3px; }
.row .shade { width: 16px; height: 18px; margin: 0 3px; background: #aaa; }
.row .ring { width: 16px; height: 16px; margin: 0 3px; border: 1px solid #777; border-radius: 50%; font-size: 9px; }
.hot { display: flex; align-items: center; background: #c2d5f2; }
.combo { display: flex; align-items: center; border: 1px solid #ababab; height: 23px; padding: 0 4px 0 2px; color: #222; }
.combo select { flex: 1; }
.combo + .combo { border-left: 0; }
.w90 { width: 90px; } .w48 { width: 48px; }
.gallery { display: flex; height: 61px; margin: 2px 6px 0 4px; border: 1px solid #ababab; }
.gallery > button { flex: 1 1 0; min-width: 0; padding: 5px 3px 0; display: flex; flex-direction: column; align-items: center; justify-content: flex-start; gap: 1px; color: #666; border: 3px solid transparent; border-width: 2px 3px; white-space: nowrap; }
.gallery > .on { border-color: #c2d5f2; }
.gallery span { width: 58px; height: 28px; overflow: hidden; color: #000; line-height: 28px; text-align: left; }
.gallery .s1 { font-family: "Liberation Serif", serif; font-size: 15px; }
.gallery .h1 { font-weight: 700; font-size: 19px; }
.gallery .h2 { font-weight: 700; font-size: 24px; }
.gallery .h3t { font-weight: 700; font-size: 22px; }
.gallery .t1 { font-size: 19px; } .gallery .t2 { font-size: 15px; font-style: italic; }
.gallery .b { font-weight: 700; } .gallery .i { font-style: italic; }
.gallery .g { color: #555; } .gallery .bl { color: #5b9bd5; }
.gallery .rule { height: 22px; line-height: 20px; margin: 3px 0; border: 1px solid #5b9bd5; border-width: 1px 0; }
.gallery .sc { font-variant: small-caps; }
.gscroll { width: 15px; flex: none; display: grid; grid-template-rows: 1fr 1fr 1fr; border-left: 1px solid #ababab; }
.gscroll button { display: grid; place-items: center; }
.gscroll button + button { border-top: 1px solid #ababab; }
.gscroll svg { width: 8px; height: 8px; }
.grp5 .stack { padding: 0 0 0 7px; }
.far { margin-left: 4px; }
.fold { width: 32px; display: grid; place-items: end center; padding: 0 0 5px 4px; }
.fold svg { width: 10px; height: 8px; }

/* ruler */
.ruler { position: relative; flex: none; height: 15px; margin: 4px 17px 0 0; padding-left: 45px; border: 1px solid #e1e1e1; border-width: 1px 0; background: linear-gradient(90deg, #e3e3e3 29px, #fff 29px calc(100% - 32px), #e3e3e3 calc(100% - 32px)); overflow: visible; }
.nums { display: flex; overflow: hidden; height: 13px; }
.nums span { flex: none; width: 32px; text-align: center; font: 10px/13px "Noto Sans", sans-serif; background: linear-gradient(#bbb, #bbb) 8px 5px / 1px 6px no-repeat, linear-gradient(#bbb, #bbb) 24px 5px / 1px 6px no-repeat; }
.mk { position: absolute; width: 9px; height: 7px; background: #888; }
.down { left: 81px; top: -2px; clip-path: polygon(0 0, 100% 0, 100% 50%, 50% 100%, 0 50%); }
.hang { left: 119px; top: 9px; height: 12px; clip-path: polygon(0 30%, 50% 0, 100% 30%, 100% 100%, 0 100%); }
.end { right: 26px; top: 9px; clip-path: polygon(0 50%, 50% 0, 100% 50%, 100% 100%, 0 100%); }

/* document */
.doc { flex: 1; min-height: 0; margin-bottom: 17px; padding: 7px 0 0 30px; overflow: hidden; color: #000; font: 16px/19px "Liberation Serif", "Noto Sans CJK TC", serif; white-space: nowrap; }
.doc p { margin: 0; height: 19px; }
.doc .tall { height: 20px; line-height: 20px; }
.pm { color: #777; font: 12px/12px "DejaVu Sans", sans-serif; }
.in1 { padding-left: 28px; } .in2 { padding-left: 58px; } .in3 { padding-left: 96px; }
.tabbed { margin-left: 38px; }
.n { display: inline-block; width: 37px; } .w38 { width: 38px; } .w28 { width: 28px; } .w25 { width: 25px; } .w41 { width: 41px; }
.wavy { text-decoration: underline wavy #f00 1px; }
.figrow { display: flex; align-items: flex-end; gap: 2px; margin-left: 96px; }
.figrow.top { align-items: flex-start; margin-top: 1px; }
.figrow.top > .pm { margin-top: 10px; }
.fig1 { position: relative; margin: 0; width: 586px; height: 336px; overflow: hidden; }
.mini td { font-size: 10px; line-height: 10px; padding-left: 2px; color: #111; border-color: #e0e0e0; }
.mini th { font: 11px/9px "Liberation Serif", serif; color: #888; padding-left: 3px; vertical-align: bottom; border-color: #e0e0e0 #aaa; }
.mini .high { vertical-align: top; }
.m0 { width: 16px; } .mA { width: 7px; } .mB { width: 141px; } .mC { width: 18px; } .mD { width: 247px; } .mE { width: 109px; } .mF { width: 6px; }
.k5 > * { height: 5px; } .k10 > * { height: 10px; } .k12 > * { height: 12px; } .k13 > * { height: 13px; } .k18 > * { height: 18px; } .k19 > * { height: 19px; } .k31 > * { height: 31px; }
.mini .k5 > * { font-size: 0; line-height: 0; }
.mini td.slip { font: 700 20px/26px "Liberation Sans", sans-serif; text-align: center; text-decoration: underline; }
.mini td.right { text-align: right; padding-right: 2px; }
.mini .above td, .mini .picked > * { border-bottom: 2px solid #4a9468; }
.mini .picked td { background: #c6c6c6; }
.mini .picked th { background: #9fd5b7; color: #217346; }
.mini .under td:not(:last-child), .mini .head td:nth-child(n+3):nth-child(-n+6) { border-bottom-color: #444; }
.mini .boxed td:nth-child(7) { border-right-color: #444; }
.logo2 { position: absolute; left: 21px; top: 0; width: 124px; height: 28px; background: #fff; display: flex; gap: 8px; }
.logo2 svg { width: 32px; height: 28px; }
.logo2 div { display: flex; flex-direction: column; padding-top: 2px; width: 82px; }
.logo2 strong { font: 14px/14px "DejaVu Sans", sans-serif; padding-left: 4px; }
.logo2 small { font: 7px/9px "DejaVu Sans Mono", monospace; padding-left: 3px; }
.minibar { position: absolute; left: 11px; top: 109px; width: 144px; height: 30px; background: #fff; border: 1px solid #ccc; box-shadow: 1px 1px 2px #bbb; font: 8px/10px "Noto Sans", sans-serif; color: #444; padding: 2px; }
.minibar div { display: flex; gap: 6px; height: 13px; align-items: center; }
.minibar svg { width: 9px; height: 9px; }
.minibar div + div { padding-left: 4px; gap: 7px; }
.mf, .ms { display: flex; justify-content: space-between; align-items: center; border: 1px solid #ccc; height: 12px; width: 37px; }
.ms { width: 23px; margin-left: -6px; }
.mf svg, .ms svg { width: 6px; height: 6px; }
.menu { position: absolute; left: 11px; top: 148px; width: 78px; height: 166px; margin: 0; padding: 1px 0; list-style: none; background: #fff; border: 1px solid #ccc; box-shadow: 1px 1px 2px #bbb; font: 7px/13px "Noto Sans", "Noto Sans CJK TC", sans-serif; color: #555; }
.menu li { position: relative; padding-left: 17px; height: 13px; }
.menu li > svg { position: absolute; left: 3px; top: 2px; width: 9px; height: 9px; }
.menu .opt { background: linear-gradient(#eee, #eee) 14px 0 no-repeat; }
.menu .pic { height: 16px; }
.menu .pic svg { left: 17px; top: 2px; width: 12px; height: 13px; }
.menu .ln { border-bottom: 1px solid #ddd; height: 14px; }
.menu .del { background: #cdeedc; }
.tips { width: 691px; height: 218px; table-layout: fixed; border-collapse: collapse; border: 1px solid #000; line-height: 24px; }
.tips > tbody > tr > td { padding: 0; vertical-align: top; }
.tips .ta { width: 85px; text-align: center; border-right: 1px dashed #888; }
.ta p { padding-top: 4px; height: 24px; }
.ta div { display: flex; align-items: flex-end; gap: 2px; padding: 9px 0 0 21px; }
.ta svg { width: 43px; height: 48px; }
.ta div + p { padding-top: 11px; }
.tips > tbody > tr > .tb { width: 75px; padding: 96px 0 0 8px; border-right: 1px dashed #888; }
.tb b { font-size: 21px; }
.tips > tbody > tr > .tc { padding: 2px 0 0 8px; }
.tc p { height: 24px; }
.tc .figrow { margin: -2px 0 0 68px; }
.fig2 { margin: 0; width: 376px; height: 143px; overflow: hidden; font: 7px/13px "Noto Sans", "Noto Sans CJK TC", sans-serif; color: #555; }
.q { display: flex; gap: 9px; height: 13px; padding-left: 5px; }
.q svg { width: 9px; height: 10px; }
.tt { display: flex; gap: 15px; height: 13px; }
.tt .f { width: 33px; background: #217346; color: #fff; text-align: center; margin-right: -6px; }
.ff { display: flex; height: 15px; margin-top: 10px; padding-left: 3px; }
.ff > span { border: 1px solid #d4d4d4; display: flex; align-items: center; }
.nb { width: 120px; margin-right: 17px; padding-left: 1px; }
.nb mark { background: #1979d2; color: #fff; font: 10px/9px "Liberation Serif", serif; }
.xx { width: 60px; justify-content: space-around; margin-right: 2px; }
.xx svg { width: 10px; height: 9px; }
.xx em { font: italic 12px/12px "Liberation Serif", serif; }
.bb { flex: 1; }
.low { display: flex; height: 94px; }
.low ul { flex: none; width: 120px; margin: -2px 0 0 3px; padding: 0 0 0 3px; list-style: none; border: 1px solid #5aa5e0; border-width: 1px 2px 0 1px; font: 9px/11px "Liberation Serif", serif; height: 96px; overflow: hidden; background: linear-gradient(90deg, #fff 108px, #eee 108px); }
.cells { flex: 1; display: flex; flex-direction: column; background: linear-gradient(#ddd, #ddd) 40px 0 / 1px 100% no-repeat, linear-gradient(#ddd, #ddd) 59px 0 / 1px 100% no-repeat; }
.hd { flex: none; height: 15px; margin-top: 5px; background: #dedede; border-bottom: 2px solid #3b8a5b; color: #217346; font: 11px/13px "Liberation Serif", serif; display: flex; box-shadow: 0 1px 0 #888, 0 3px 0 #eee, 0 4px 0 #888, 0 6px 0 #eee, 0 8px 0 #bbb; }
.hd span { width: 19px; margin-left: 40px; text-align: center; }
.hd span + span { margin-left: 114px; }
.fill { flex: none; height: 34px; border-bottom: 1px solid #e0e0e0; }
.gap { flex: none; height: 7px; border-bottom: 1px solid #e0e0e0; }
.tail { display: flex; flex-direction: column; color: #222; }
.tail b { font: 9px/12px "Noto Sans CJK TC", sans-serif; margin-top: 4px; }
.tail strong { width: 20px; border-top: 1px solid #a5cbb0; font: 13px/15px "DejaVu Sans", sans-serif; }
```
